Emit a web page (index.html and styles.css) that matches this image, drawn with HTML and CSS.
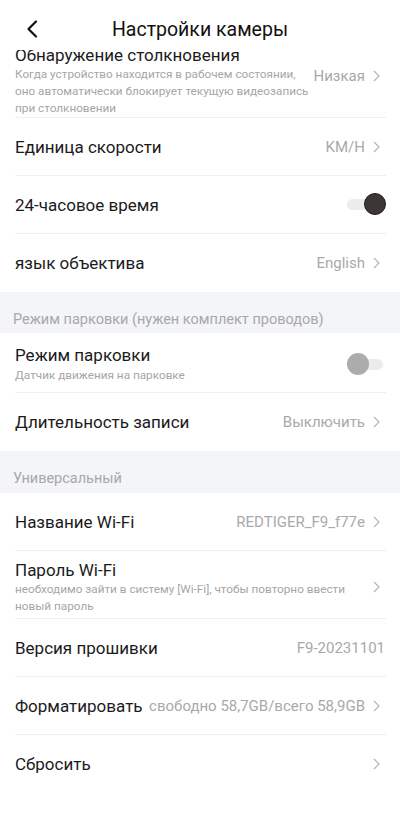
FILE: index.html
```html
<!DOCTYPE html>
<html lang="ru">
<head>
  <meta charset="UTF-8">
  <title>Настройки камеры</title>
  <meta name="viewport" content="width=device-width, initial-scale=1.0">
  <link rel="stylesheet" href="styles.css">
</head>
<body>
  <header class="topbar">
    <button class="back" aria-label="Назад">
      <svg width="12" height="18" viewBox="0 0 12 18"><polyline points="10,1.5 2.5,9 10,16.5" fill="none" stroke="#111" stroke-width="2.2" stroke-linecap="round" stroke-linejoin="round"/></svg>
    </button>
    <h1>Настройки камеры</h1>
    <span></span>
  </header>

  <main class="scroller">
    <div class="list">
      <div class="group">
        <div class="row row-first">
          <div class="row-text">
            <div class="row-title">Обнаружение столкновения</div>
            <div class="row-desc">Когда устройство находится в рабочем состоянии,<br>оно автоматически блокирует текущую видеозапись<br>при столкновении</div>
          </div>
          <span class="row-value">Низкая</span>
          <svg class="chev" viewBox="0 0 14 14"><polyline points="2,2 7,7 2,12"/></svg>
        </div>
        <div class="row">
          <div class="row-title">Единица скорости</div>
          <span class="row-value">KM/H</span>
          <svg class="chev" viewBox="0 0 14 14"><polyline points="2,2 7,7 2,12"/></svg>
        </div>
        <div class="row">
          <div class="row-title">24-часовое время</div>
          <span class="switch on"><span class="knob"></span></span>
        </div>
        <div class="row">
          <div class="row-title">язык объектива</div>
          <span class="row-value">English</span>
          <svg class="chev" viewBox="0 0 14 14"><polyline points="2,2 7,7 2,12"/></svg>
        </div>
      </div>

      <div class="section-label">Режим парковки (нужен комплект проводов)</div>
      <div class="group">
        <div class="row row-park">
          <div class="row-text">
            <div class="row-title">Режим парковки</div>
            <div class="row-desc">Датчик движения на парковке</div>
          </div>
          <span class="switch"><span class="knob"></span></span>
        </div>
        <div class="row">
          <div class="row-title">Длительность записи</div>
          <span class="row-value">Выключить</span>
          <svg class="chev" viewBox="0 0 14 14"><polyline points="2,2 7,7 2,12"/></svg>
        </div>
      </div>

      <div class="section-label section-wide">Универсальный</div>
      <div class="group">
        <div class="row">
          <div class="row-title">Название Wi-Fi</div>
          <span class="row-value">REDTIGER_F9_f77e</span>
          <svg class="chev" viewBox="0 0 14 14"><polyline points="2,2 7,7 2,12"/></svg>
        </div>
        <div class="row row-pass">
          <div class="row-text">
            <div class="row-title">Пароль Wi-Fi</div>
            <div class="row-desc">необходимо зайти в систему [Wi-Fi], чтобы повторно ввести<br>новый пароль</div>
          </div>
          <svg class="chev" viewBox="0 0 14 14"><polyline points="2,2 7,7 2,12"/></svg>
        </div>
        <div class="row">
          <div class="row-title">Версия прошивки</div>
          <span class="row-value plain">F9-20231101</span>
        </div>
        <div class="row">
          <div class="row-title">Форматировать</div>
          <span class="row-value">свободно 58,7GB/всего 58,9GB</span>
          <svg class="chev" viewBox="0 0 14 14"><polyline points="2,2 7,7 2,12"/></svg>
        </div>
        <div class="row">
          <div class="row-title">Сбросить</div>
          <svg class="chev" viewBox="0 0 14 14"><polyline points="2,2 7,7 2,12"/></svg>
        </div>
      </div>
    </div>
  </main>
</body>
</html>
```

FILE: styles.css
```css
html, body {
  height: 100%;
}
body {
  margin: 0;
  font-family: Roboto, "Noto Sans", sans-serif;
  background: #fff;
  color: #1b1b1b;
  overflow: hidden;
}

/* header */
.topbar {
  display: grid;
  grid-template-columns: 56px 1fr 56px;
  align-items: center;
  height: 50px;
  padding-top: 10px;
  padding-bottom: 2px;
  box-sizing: border-box;
  background: #fff;
}
.back {
  border: 0;
  background: none;
  padding: 0 0 0 26px;
  display: flex;
  align-items: center;
  height: 20px;
}
.topbar h1 {
  margin: 0;
  font-size: 19.5px;
  font-weight: 400;
  text-align: center;
  color: #111;
}

/* list */
.scroller {
  height: calc(100% - 50px);
  overflow: hidden;
}
.list {
  margin-top: -11px;
}
.row {
  display: flex;
  align-items: center;
  min-height: 58px;
  margin: 0 14px 0 15px;
  padding: 5px 0;
  box-sizing: border-box;
  border-bottom: 1px solid #efefef;
}
.group .row:last-child {
  border-bottom: 0;
}
.row-first {
  padding-bottom: 0;
}
.row-first .row-value,
.row-first .chev {
  margin-bottom: 9px;
}
.row-park {
  padding: 11px 0 8px;
}
.row-park .row-desc {
  margin-top: 1px;
}
.row-pass {
  padding: 8px 0 3px;
}
.row-text {
  flex: 1;
  min-width: 0;
}
.row-title {
  font-size: 17px;
  line-height: 22px;
  flex: 1;
  white-space: nowrap;
}
.row-desc {
  font-size: 11.75px;
  line-height: 17px;
  color: #a6a6a6;
  white-space: nowrap;
}
.row-value {
  font-size: 15px;
  color: #a9a9a9;
  margin-right: 7px;
  white-space: nowrap;
}
.row-value.plain {
  margin-right: 1px;
}
.chev {
  width: 14px;
  height: 14px;
  flex: none;
}
.chev polyline {
  fill: none;
  stroke: #b5b5b5;
  stroke-width: 1.2;
}

/* toggles */
.switch {
  position: relative;
  width: 36px;
  height: 11px;
  margin-right: 3px;
  border-radius: 6px;
  background: #ececec;
}
.knob {
  position: absolute;
  top: -6px;
  left: 0;
  width: 22px;
  height: 22px;
  border-radius: 50%;
  background: #acacac;
  box-sizing: border-box;
}
.switch.on .knob {
  left: auto;
  right: -3px;
  background: #3c3637;
  border: 1px solid #1f1b1c;
}

/* section headers */
.section-label {
  background: #f3f5f8;
  padding: 20px 13px 5px;
  font-size: 14.5px;
  line-height: 16px;
  color: #a8a8a8;
}
.section-wide {
  padding-bottom: 6px;
}
```
